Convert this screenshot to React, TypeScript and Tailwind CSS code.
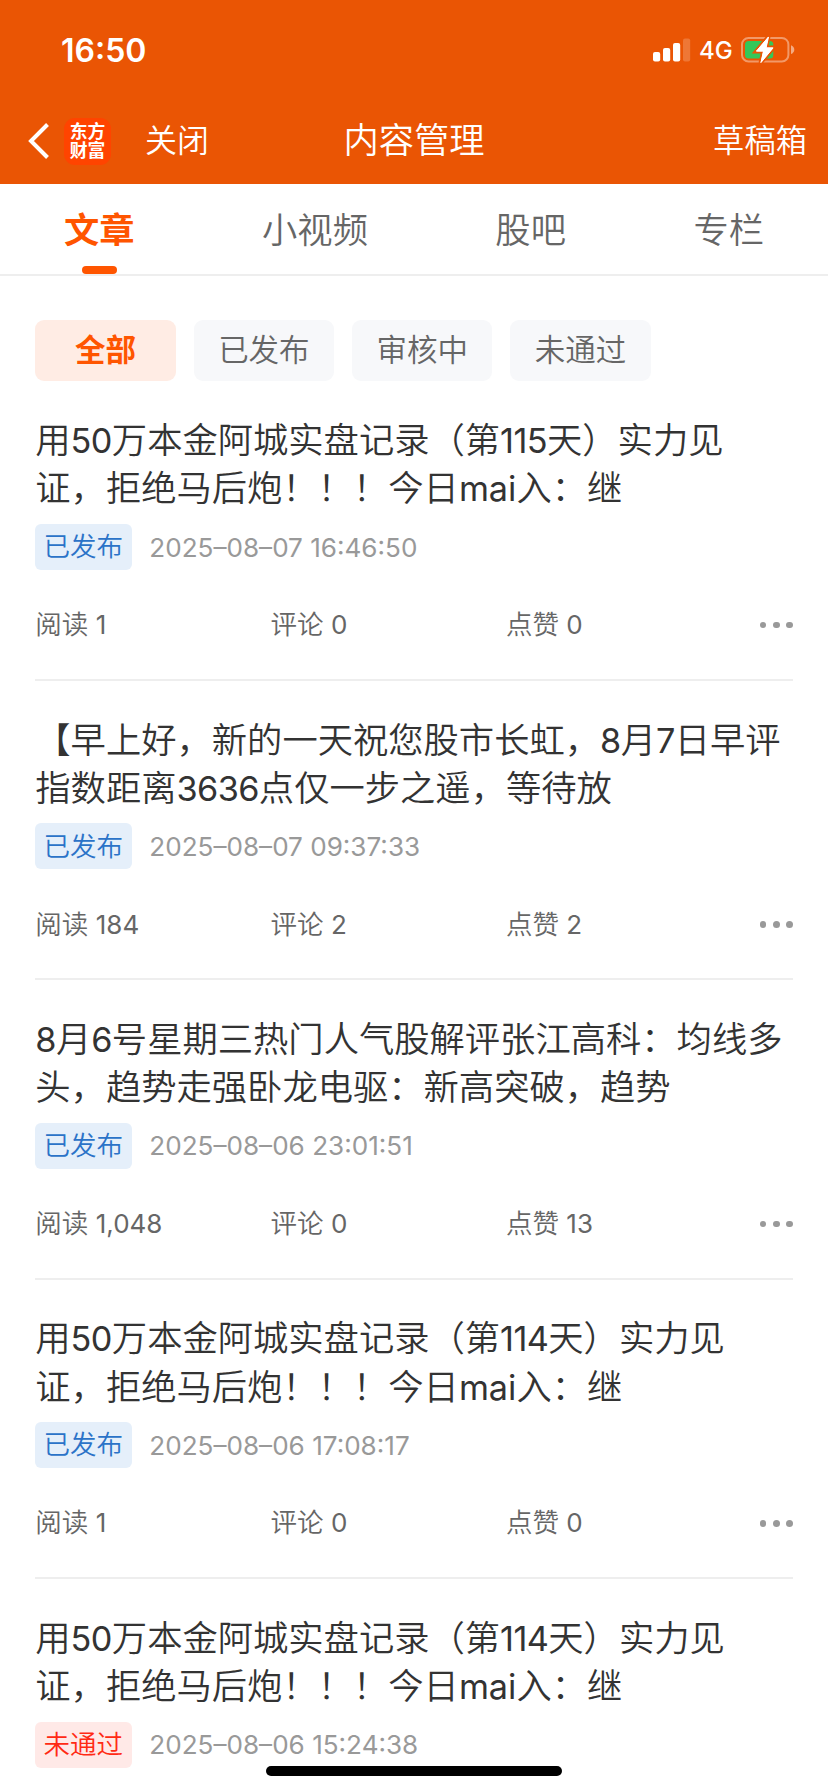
const tabs = ['文章', '小视频', '股吧', '专栏'];
const filters = ['全部', '已发布', '审核中', '未通过'];

const articles = [
  { id: 1, title: ['用50万本金阿城实盘记录（第115天）实力见', '证，拒绝马后炮！！！今日mai入：继'], passed: true, date: '2025–08–07 16:46:50', stats: { reads: '1', comments: '0', likes: '0' } },
  { id: 2, title: ['【早上好，新的一天祝您股市长虹，8月7日早评', '指数距离3636点仅一步之遥，等待放'], passed: true, date: '2025–08–07 09:37:33', stats: { reads: '184', comments: '2', likes: '2' } },
  { id: 3, title: ['8月6号星期三热门人气股解评张江高科：均线多', '头，趋势走强卧龙电驱：新高突破，趋势'], passed: true, date: '2025–08–06 23:01:51', stats: { reads: '1,048', comments: '0', likes: '13' } },
  { id: 4, title: ['用50万本金阿城实盘记录（第114天）实力见', '证，拒绝马后炮！！！今日mai入：继'], passed: true, date: '2025–08–06 17:08:17', stats: { reads: '1', comments: '0', likes: '0' } },
  { id: 5, title: ['用50万本金阿城实盘记录（第114天）实力见', '证，拒绝马后炮！！！今日mai入：继'], passed: false, date: '2025–08–06 15:24:38', stats: null },
];

// Latin letters and digits are set slightly smaller than the Chinese text around them
function Title({ text }: { text: string }) {
  return (
    <div>
      {text.split(/([0-9]+|[a-z]+)/).map((part, i) => {
        if (i % 2 === 0) return part;
        return (
          <span key={i} className={/\d/.test(part) ? 'text-[0.97em] font-normal tracking-[-0.6px]' : 'text-[0.97em] font-normal'}>
            {part}
          </span>
        );
      })}
    </div>
  );
}

function StatusBar() {
  return (
    <div className="flex h-[100px] items-center justify-between pl-[61px] pr-[33px]">
      <span className="pt-px text-[32px] font-semibold leading-none">16:50</span>
      <div className="flex items-center">
        <svg width="38" height="24" viewBox="0 0 38 24" fill="#fff">
          <rect x="0" y="14" width="7.2" height="9.4" rx="2" />
          <rect x="10" y="10" width="7.2" height="13.4" rx="2" />
          <rect x="20" y="5" width="7.2" height="18.4" rx="2" />
          <rect x="30" y="0.4" width="7.2" height="23" rx="2" opacity="0.2" />
        </svg>
        <span className="ml-[8px] w-[35px] pt-0.5 text-[24px] font-[450] leading-none">4G</span>
        <svg className="ml-[7px]" width="54" height="28" viewBox="0 0 54 28" fill="none">
          <rect x="1" y="2" width="46.4" height="23.4" rx="6.5" stroke="#fff" strokeOpacity="0.4" strokeWidth="2" />
          <path d="M50 9.300c2 .8 3.300 2.500 3.300 4.400s-1.300 3.600-3.300 4.400z" fill="#fff" fillOpacity="0.5" />
          <rect x="4" y="5" width="28.300" height="17.400" rx="3.500" fill="#34c759" />
          <path d="M27.500 0.500L15 15.500h7.200L19.500 27 32.500 11.500h-7.200z" fill="#fff" stroke="#ea5504" strokeWidth="4" paintOrder="stroke" />
          <path d="M27.500 1L15.500 15h7L20 26.500 32 12h-7z" fill="#fff" stroke="#fff" strokeWidth="1" strokeLinejoin="round" />
        </svg>
      </div>
    </div>
  );
}

function NavBar() {
  return (
    <div className="grid h-[82px] grid-cols-[1fr_auto_1fr] items-center pl-7 pr-[21px]">
      <div className="flex items-center">
        <svg className="shrink-0" width="22" height="36" viewBox="0 0 22 36" fill="none" stroke="#fff" strokeWidth="4">
          <path d="M19.500 1.500L3 18l16.500 16.500" />
        </svg>
        <div className="ml-[14px] flex h-[47px] w-[47px] shrink-0 flex-col items-center justify-center rounded-[11px] bg-[#ff4400] text-[17.800px] font-bold leading-[19px]">
          <span>东方</span>
          <span>财富</span>
        </div>
        <span className="ml-[34px] whitespace-nowrap text-[32px]">关闭</span>
      </div>
      <h1 className="pr-[7px] text-center text-[35.300px]">内容管理</h1>
      <span className="text-right text-[31.300px]">草稿箱</span>
    </div>
  );
}

export default function App() {
  return (
    <div className="relative h-[1792px] w-[828px] overflow-hidden bg-white font-['Inter','Noto_Sans_CJK_SC',sans-serif] font-[350]">
      <header className="h-[184px] bg-[#ea5504] text-white">
        <StatusBar />
        <NavBar />
      </header>

      <nav className="flex h-[92px] justify-between border-b-2 border-[#eeeeee] px-[64px]">
        {tabs.map((tab, i) => (
          <div key={tab} className="flex flex-col items-center justify-between">
            <span className={i === 0 ? 'pt-[21px] text-[35.300px] font-bold leading-[52px] text-[#ff5500]' : 'pt-[21px] text-[35.300px] leading-[52px] text-[#666666]'}>
              {tab}
            </span>
            {i === 0 && <span className="h-2 w-[35px] rounded-full bg-[#ff5500]" />}
          </div>
        ))}
      </nav>

      <div className="flex gap-[17.700px] px-[35.300px] pb-[0.7px] pt-11">
        {filters.map((filter, i) => (
          <button
            key={filter}
            className={
              i === 0
                ? 'h-[61px] w-[140.600px] rounded-[9px] bg-[#ffece4] pb-0.5 text-[30.500px] font-bold text-[#ff5500]'
                : 'h-[61px] w-[140.600px] rounded-[9px] bg-[#f7f8fa] pb-0.5 text-[30.500px] text-[#666666]'
            }
          >
            {filter}
          </button>
        ))}
      </div>

      <main className="px-[35.300px]">
        {articles.map((article) => (
          <article key={article.id} className="h-[299.400px] border-b-2 border-[#eeeeee] pt-[35.500px]">
            <h2 className="whitespace-nowrap text-[35.300px] leading-[48.200px] text-[#333333]">
              {article.title.map((line) => (
                <Title key={line} text={line} />
              ))}
            </h2>
            <div className="mt-[10.500px] flex h-[46px] items-center">
              <span
                className={
                  article.passed
                    ? 'flex h-[46px] w-[97px] items-center justify-center rounded-[6px] bg-[#e5effa] pr-px text-[26.500px] text-[#2b73c8]'
                    : 'flex h-[46px] w-[97px] items-center justify-center rounded-[6px] bg-[#ffe9e7] pr-px text-[26.500px] text-[#ff2a14]'
                }
              >
                {article.passed ? '已发布' : '未通过'}
              </span>
              <span className="ml-[17px] text-[26.100px] font-normal text-[#999999]">{article.date}</span>
            </div>
            {article.stats && (
              <div className="mt-[35px] flex h-10 items-center text-[26.500px] text-[#666666]">
                <span className="w-[235.300px]">阅读 <span className="text-[26px] font-normal">{article.stats.reads}</span></span>
                <span className="w-[235.300px]">评论 <span className="text-[26px] font-normal">{article.stats.comments}</span></span>
                <span>点赞 <span className="text-[26px] font-normal">{article.stats.likes}</span></span>
                <span className="ml-auto flex gap-[6.600px]">
                  <i className="h-[6.600px] w-[6.600px] rounded-full bg-[#999999]" />
                  <i className="h-[6.600px] w-[6.600px] rounded-full bg-[#999999]" />
                  <i className="h-[6.600px] w-[6.600px] rounded-full bg-[#999999]" />
                </span>
              </div>
            )}
          </article>
        ))}
      </main>

      {/* home indicator */}
      <div className="absolute bottom-4 left-[266px] h-[10px] w-[296px] rounded-full bg-black" />
    </div>
  );
}
